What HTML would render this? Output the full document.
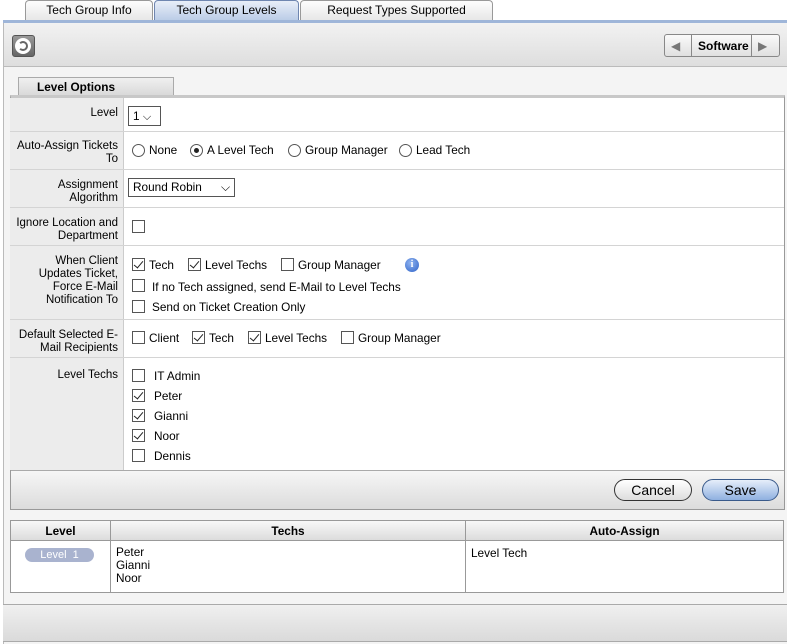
<!DOCTYPE html>
<html><head><style>
*{box-sizing:border-box;margin:0;padding:0}
body{width:787px;height:644px;background:#fff;font-family:"Liberation Sans",Arial,sans-serif;font-size:11.8px;color:#000;position:relative;overflow:hidden}
.a{position:absolute}
.tab{position:absolute;top:0;height:21px;border:1px solid #999;border-bottom:none;border-radius:4px 4px 0 0;background:linear-gradient(#fdfdfd,#e6e6e6);text-align:center;line-height:19px;font-size:12px}
.cb{position:absolute;width:13px;height:13px;border:1px solid #555;background:#fff}
.cb.on::after{content:"";position:absolute;left:3px;top:0px;width:4px;height:8px;border:solid #222;border-width:0 1.5px 1.5px 0;transform:rotate(40deg)}
.rd{position:absolute;width:13px;height:13px;border:1px solid #555;border-radius:50%;background:#fff}
.rd.on::after{content:"";position:absolute;left:3px;top:3px;width:5px;height:5px;border-radius:50%;background:#222}
.lbl{position:absolute;left:10px;width:114px;background:#ececec;border-right:1px solid #ccc;text-align:right;padding-right:5px;padding-left:6px;line-height:13px;font-size:11.5px}
.hl{position:absolute;left:10px;width:774px;height:1px;background:#d4d4d4}
.t{position:absolute;white-space:nowrap}
.btn{position:absolute;height:22px;border:1px solid #333;border-radius:11px;text-align:center;line-height:20px;font-size:14px}
</style></head><body>
<div class="a" style="left:0;top:0;width:787px;height:22px;background:#fff"></div>
<div class="tab" style="left:25px;width:128px">Tech Group Info</div>
<div class="tab" style="left:154px;width:145px;background:linear-gradient(#e8eef8,#b9cbe6);border-color:#6f86b0">Tech Group Levels</div>
<div class="tab" style="left:300px;width:193px">Request Types Supported</div>
<div class="a" style="left:3px;top:20px;width:784px;height:3px;background:#9fb6d9"></div>
<div class="a" style="left:3px;top:23px;width:784px;height:44px;background:linear-gradient(#f2f2f2,#dedede);border-bottom:1px solid #bbb;border-left:1px solid #bbb"></div>
<div class="a" style="left:12px;top:35px;width:23px;height:22px;border:1px solid #555;border-radius:3px;background:linear-gradient(#999,#666)"></div>
<div class="a" style="left:15px;top:38px;width:16px;height:16px;border-radius:50%;background:#fff"></div>
<div class="a" style="left:18px;top:41px;width:10px;height:10px;border-radius:50%;border:2.5px solid #666;border-left-color:transparent"></div>
<div class="a" style="left:664px;top:34px;width:116px;height:23px;border:1px solid #888;border-radius:3px;background:linear-gradient(#fafafa,#e0e0e0)"></div>
<div class="a" style="left:691px;top:34px;width:1px;height:23px;background:#888"></div>
<div class="a" style="left:751px;top:34px;width:1px;height:23px;background:#888"></div>
<div class="t" style="left:671px;top:39px;color:#777">◀</div>
<div class="t" style="left:758px;top:39px;color:#777">▶</div>
<div class="t" style="left:698px;top:39px;font-weight:bold;font-size:12px">Software</div>
<div class="a" style="left:3px;top:67px;width:784px;height:577px;background:#f4f4f4;border-left:1px solid #bbb"></div>
<div class="a" style="left:18px;top:77px;width:156px;height:19px;background:linear-gradient(#f0f0f0,#d8d8d8);border:1px solid #aaa;border-bottom:none;font-weight:bold;padding-left:18px;line-height:18px">Level Options</div>
<div class="a" style="left:10px;top:95px;width:775px;height:415px;background:#fff;border:1px solid #999;border-top:3px solid #c8c8c8"></div>
<div class="lbl" style="top:98px;height:33px;padding-top:9px">Level</div>
<div class="a" style="left:128px;top:106px;width:33px;height:20px;border:1px solid #555;padding-left:4px;line-height:18px">1 <span style="font-size:11px">⌵</span></div>
<div class="hl" style="top:131px"></div>
<div class="lbl" style="top:132px;height:37px;padding-top:8px">Auto-Assign Tickets To</div>
<div class="rd" style="left:132px;top:144px"></div><div class="t" style="left:149px;top:143px">None</div>
<div class="rd on" style="left:190px;top:144px"></div><div class="t" style="left:207px;top:143px">A Level Tech</div>
<div class="rd" style="left:288px;top:144px"></div><div class="t" style="left:305px;top:143px">Group Manager</div>
<div class="rd" style="left:399px;top:144px"></div><div class="t" style="left:416px;top:143px">Lead Tech</div>
<div class="hl" style="top:169px"></div>
<div class="lbl" style="top:170px;height:37px;padding-top:9px">Assignment Algorithm</div>
<div class="a" style="left:128px;top:178px;width:107px;height:19px;border:1px solid #555;padding-left:4px;line-height:17px">Round Robin <span style="position:absolute;right:4px">⌵</span></div>
<div class="hl" style="top:207px"></div>
<div class="lbl" style="top:208px;height:37px;padding-top:9px">Ignore Location and Department</div>
<div class="cb" style="left:132px;top:220px"></div>
<div class="hl" style="top:245px"></div>
<div class="lbl" style="top:246px;height:73px;padding-top:9px">When Client Updates Ticket, Force E-Mail Notification To</div>
<div class="cb on" style="left:132px;top:258px"></div><div class="t" style="left:149px;top:258px">Tech</div>
<div class="cb on" style="left:188px;top:258px"></div><div class="t" style="left:205px;top:258px">Level Techs</div>
<div class="cb" style="left:281px;top:258px"></div><div class="t" style="left:298px;top:258px">Group Manager</div>
<div class="a" style="left:405px;top:258px;width:14px;height:14px;border-radius:50%;background:radial-gradient(circle at 40% 35%,#8fb3f0,#2f63c8);color:#fff;font:bold 10px 'Liberation Serif',serif;text-align:center;line-height:14px">i</div>
<div class="cb" style="left:132px;top:279px"></div><div class="t" style="left:152px;top:280px">If no Tech assigned, send E-Mail to Level Techs</div>
<div class="cb" style="left:132px;top:300px"></div><div class="t" style="left:152px;top:300px">Send on Ticket Creation Only</div>
<div class="hl" style="top:319px"></div>
<div class="lbl" style="top:320px;height:37px;padding-top:9px">Default Selected E-Mail Recipients</div>
<div class="cb" style="left:132px;top:331px"></div><div class="t" style="left:149px;top:331px">Client</div>
<div class="cb on" style="left:192px;top:331px"></div><div class="t" style="left:209px;top:331px">Tech</div>
<div class="cb on" style="left:248px;top:331px"></div><div class="t" style="left:265px;top:331px">Level Techs</div>
<div class="cb" style="left:341px;top:331px"></div><div class="t" style="left:358px;top:331px">Group Manager</div>
<div class="hl" style="top:357px"></div>
<div class="lbl" style="top:358px;height:112px;padding-top:11px">Level Techs</div>
<div class="cb" style="left:132px;top:369px"></div><div class="t" style="left:154px;top:369px">IT Admin</div>
<div class="cb on" style="left:132px;top:389px"></div><div class="t" style="left:154px;top:389px">Peter</div>
<div class="cb on" style="left:132px;top:409px"></div><div class="t" style="left:154px;top:409px">Gianni</div>
<div class="cb on" style="left:132px;top:429px"></div><div class="t" style="left:154px;top:429px">Noor</div>
<div class="cb" style="left:132px;top:449px"></div><div class="t" style="left:154px;top:449px">Dennis</div>
<div class="a" style="left:11px;top:470px;width:773px;height:39px;background:linear-gradient(#f6f6f6,#dcdcdc);border-top:1px solid #aaa"></div>
<div class="btn" style="left:614px;top:479px;width:78px;background:linear-gradient(#fff,#ddd)">Cancel</div>
<div class="btn" style="left:702px;top:479px;width:77px;background:linear-gradient(#e6eefa,#8fb0e0);border-color:#3a5a8a">Save</div>
<div class="a" style="left:10px;top:520px;width:774px;height:73px;background:#fff;border:1px solid #999"></div>
<div class="a" style="left:11px;top:521px;width:772px;height:20px;background:linear-gradient(#f8f8f8,#dcdcdc);border-bottom:1px solid #999"></div>
<div class="a" style="left:110px;top:521px;width:1px;height:71px;background:#999"></div>
<div class="a" style="left:465px;top:521px;width:1px;height:71px;background:#999"></div>
<div class="t" style="left:11px;width:99px;top:524px;text-align:center;font-weight:bold">Level</div>
<div class="t" style="left:111px;width:354px;top:524px;text-align:center;font-weight:bold">Techs</div>
<div class="t" style="left:466px;width:317px;top:524px;text-align:center;font-weight:bold">Auto-Assign</div>
<div class="a" style="left:25px;top:548px;width:69px;height:14px;border-radius:7px;background:#a9b3cf;color:#fff;font-size:11px;text-align:center;line-height:14px">Level &nbsp;1</div>
<div class="t" style="left:116px;top:546px;line-height:13px">Peter<br>Gianni<br>Noor</div>
<div class="t" style="left:471px;top:546px">Level Tech</div>
<div class="a" style="left:3px;top:604px;width:784px;height:38px;background:linear-gradient(#f0f0f0,#dadada);border-top:1px solid #aaa;border-bottom:1px solid #aaa"></div>
</body></html>
